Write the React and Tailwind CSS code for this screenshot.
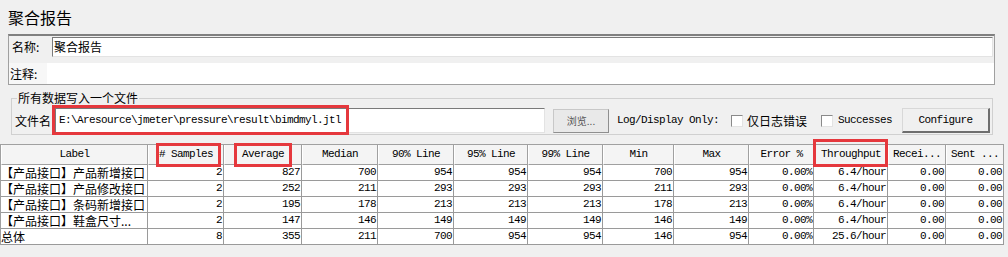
const mono = "font-['Liberation_Mono','Noto_Sans_CJK_SC',monospace] text-[11px] tracking-[-0.6px]";
const cjk = "font-['Noto_Sans_CJK_SC',sans-serif] text-[12px]";

const widths = [
  "w-[147px]", "w-[76px]", "w-[78px]", "w-[76px]", "w-[76px]", "w-[74px]", "w-[75px]",
  "w-[71px]", "w-[75px]", "w-[65px]", "w-[74px]", "w-[58px]", "w-[58px]",
];

const headers = [
  "Label", "# Samples", "Average", "Median", "90% Line", "95% Line", "99% Line",
  "Min", "Max", "Error %", "Throughput", "Recei...", "Sent ...",
];

const rows = [
  ["【产品接口】产品新增接口", "2", "827", "700", "954", "954", "954", "700", "954", "0.00%", "6.4/hour", "0.00", "0.00"],
  ["【产品接口】产品修改接口", "2", "252", "211", "293", "293", "293", "211", "293", "0.00%", "6.4/hour", "0.00", "0.00"],
  ["【产品接口】条码新增接口", "2", "195", "178", "213", "213", "213", "178", "213", "0.00%", "6.4/hour", "0.00", "0.00"],
  ["【产品接口】鞋盒尺寸...", "2", "147", "146", "149", "149", "149", "146", "149", "0.00%", "6.4/hour", "0.00", "0.00"],
  ["总体", "8", "355", "211", "700", "954", "954", "146", "954", "0.00%", "25.6/hour", "0.00", "0.00"],
];

function Checkbox() {
  return (
    <span className="w-[12px] h-[12px] bg-white border-t border-l border-[#8a8a8a] border-b border-r border-b-[#e3e3e3] border-r-[#e3e3e3] shrink-0" />
  );
}

export default function App() {
  return (
    <div className="relative w-[1008px] h-[257px] overflow-hidden bg-[#f0f0f0] text-black">

      {/* TITLE */}
      <div className="h-[34px] pl-[8px] pt-[5px] text-[16px] leading-[24px] font-['Noto_Sans_CJK_SC',sans-serif]">
        聚合报告
      </div>

      {/* NAME / COMMENT */}
      <div className="ml-[8px] w-[987px] h-[51px] border-t-2 border-t-[#808080] border-l border-r border-b border-[#a0a0a0] flex flex-col">
        <div className="h-[20px] flex items-stretch mt-[1px]">
          <div className={`${cjk} w-[43px] pl-[3px] flex items-center`}>名称:</div>
          <div className={`${cjk} flex-1 bg-white border-t border-l border-[#7a7a7a] border-b border-b-[#e3e3e3] border-r border-r-[#e3e3e3] mr-[1px] flex items-center pl-[1px]`}>
            聚合报告
          </div>
        </div>
        <div className="h-[6px]" />
        <div className="flex-1 flex items-stretch">
          <div className={`${cjk} w-[38px] pl-[1px] flex items-center bg-[#f7f7f7]`}>注释:</div>
          <div className="flex-1 bg-white" />
        </div>
      </div>

      {/* FILE */}
      <div className="h-[58px] pt-[5px]">
        <fieldset className="ml-[11px] w-[982px] border border-[#d0d0d0] pb-[1px]">
          <legend className={`${cjk} ml-[5px] px-[1px] leading-[16px]`}>所有数据写入一个文件</legend>
          <div className="flex items-center h-[25px] mt-[2px]">
            <div className={`${cjk} w-[43px] pl-[3px]`}>文件名</div>
            <div className={`${mono} w-[490px] h-[25px] bg-white border-t border-l border-[#7a7a7a] border-b border-r border-b-[#e3e3e3] border-r-[#e3e3e3] flex items-center pl-[3px]`}>
              E:\Aresource\jmeter\pressure\result\bimdmyl.jtl
            </div>
            <button className="ml-[8px] w-[56px] h-[24px] bg-[#e9e9e9] border border-[#c8c8c8] border-b-[#8f8f8f] border-r-[#8f8f8f] text-[10px] text-[#555] font-['Noto_Sans_CJK_SC',sans-serif] flex items-center justify-center">
              浏览...
            </button>
            <span className={`${mono} ml-[8px]`}>Log/Display Only:</span>
            <span className="ml-[12px] flex items-center"><Checkbox /></span>
            <span className={`${cjk} ml-[4px]`}>仅日志错误</span>
            <span className="ml-[14px] flex items-center"><Checkbox /></span>
            <span className={`${mono} ml-[5px]`}>Successes</span>
            <button className={`${mono} ml-[10px] w-[88px] h-[25px] bg-[#f0f0f0] border border-[#d8d8d8] border-r-2 border-b-2 border-r-[#6e6e6e] border-b-[#6e6e6e] flex items-center justify-center`}>
              Configure
            </button>
          </div>
        </fieldset>
      </div>

      {/* TABLE */}
      <div className="mt-[1px] w-[1004px] border-t border-l border-[#a0a0a0]">
        <div className="flex h-[20px]">
          {headers.map((h, i) => (
            <div
              key={h}
              className={`${widths[i]} ${mono} bg-[#f4f4f4] border-r border-b border-[#a0a0a0] border-l border-l-white flex items-center justify-center`}
            >
              {h}
            </div>
          ))}
        </div>
        {rows.map((r, ri) => (
          <div key={ri} className="flex h-[16px] bg-white">
            {r.map((c, i) => (
              <div
                key={i}
                className={`${widths[i]} border-r border-b border-[#9a9a9a] flex items-center overflow-hidden whitespace-nowrap ${
                  i === 0 ? `${cjk} leading-[15px]` : `${mono} justify-end pr-[1px]`
                }`}
              >
                {c}
              </div>
            ))}
          </div>
        ))}
      </div>

      {/* ANNOTATIONS */}
      <div className="absolute left-[52px] top-[105px] w-[297px] h-[30px] border-[3px] border-[#e5383d]" />
      <div className="absolute left-[156px] top-[143px] w-[65px] h-[24px] border-[3px] border-[#e5383d]" />
      <div className="absolute left-[234px] top-[143px] w-[58px] h-[24px] border-[3px] border-[#e5383d]" />
      <div className="absolute left-[813px] top-[139px] w-[75px] h-[28px] border-[3px] border-[#e5383d]" />
    </div>
  );
}
